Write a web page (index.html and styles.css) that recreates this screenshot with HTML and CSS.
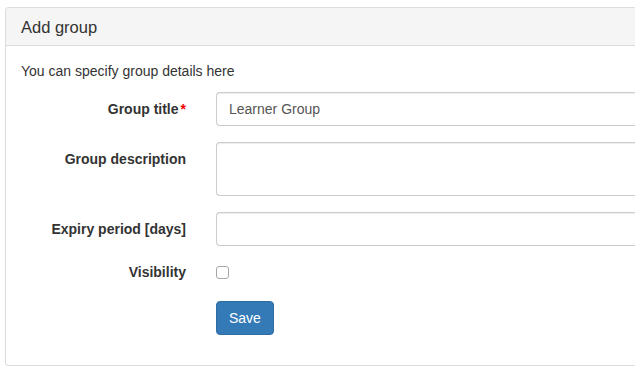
FILE: index.html
```html
<!DOCTYPE html>
<html lang="en">
<head>
  <meta charset="UTF-8" />
  <title>Add group</title>
  <link rel="stylesheet" href="styles.css">
</head>
<body>
  <div class="panel">
    <div class="panel-heading">
      <h3 class="panel-title">Add group</h3>
    </div>
    <div class="panel-body">
      <p class="intro">You can specify group details here</p>
      <form class="form-horizontal">
        <div class="form-group">
          <label class="control-label" for="title">Group title<span class="required">*</span></label>
          <input class="form-control" id="title" type="text" value="Learner Group" />
        </div>
        <div class="form-group">
          <label class="control-label" for="desc">Group description</label>
          <textarea class="form-control" id="desc" rows="2"></textarea>
        </div>
        <div class="form-group">
          <label class="control-label" for="expiry">Expiry period [days]</label>
          <input class="form-control" id="expiry" type="text" />
        </div>
        <div class="form-group visibility">
          <label class="control-label plain" for="visible">Visibility</label>
          <div><input class="check" id="visible" type="checkbox" /></div>
        </div>
        <div class="form-group last">
          <span></span>
          <div><button type="submit" class="btn">Save</button></div>
        </div>
      </form>
    </div>
  </div>
</body>
</html>
```

FILE: styles.css
```css
body {
  margin: 0;
  font-family: "Liberation Sans", Arial, sans-serif;
  font-size: 14px;
  line-height: 20px;
  color: #333;
  background: #fff;
}
/* the panel runs on past the right edge of the view, so its right side is open */
.panel {
  margin: 7px 0 0 5px;
  border: 1px solid #ddd;
  border-right: none;
  border-radius: 4px 0 0 4px;
  box-shadow: 0 1px 1px rgba(0, 0, 0, 0.05);
}
.panel-heading {
  background-color: #f5f5f5;
  border-bottom: 1px solid #ddd;
  padding: 10px 15px 9px;
  border-radius: 3px 0 0 0;
}
.panel-title {
  margin: 0;
  font-size: 16.5px;
  font-weight: normal;
  line-height: 18px;
}
.panel-body {
  padding: 15px 0 15px 15px;
}
.intro {
  margin: 0 0 11px;
}
.form-group {
  display: grid;
  grid-template-columns: 165px 1fr;
  column-gap: 30px;
  margin-bottom: 16px;
}
.form-group.last {
  margin-bottom: 15px;
}
.form-group.visibility {
  margin-bottom: 19px;
}
.control-label {
  text-align: right;
  font-weight: bold;
  padding-top: 7px;
}
.control-label.plain {
  padding-top: 0;
}
.required {
  color: #e00;
  margin-left: 2px;
}
.form-control {
  display: block;
  box-sizing: border-box;
  width: 100%;
  height: 34px;
  padding: 6px 12px;
  font-family: inherit;
  font-size: 14px;
  line-height: 20px;
  color: #555;
  background: #fff;
  border: 1px solid #ccc;
  border-right: none;
  border-radius: 4px 0 0 4px;
  box-shadow: inset 0 1px 1px rgba(0, 0, 0, 0.075);
  margin: 0;
}
textarea.form-control {
  height: 54px;
  resize: none;
}
.check {
  appearance: none;
  -webkit-appearance: none;
  display: block;
  width: 13px;
  height: 13px;
  margin: 4px 0 0;
  border: 1px solid #a6a6a6;
  border-radius: 3px;
  background: #fff;
  box-sizing: border-box;
}
.btn {
  display: inline-block;
  padding: 6px 12px;
  font-family: inherit;
  font-size: 14px;
  line-height: 20px;
  color: #fff;
  background-color: #337ab7;
  border: 1px solid #2e6da4;
  border-radius: 4px;
  cursor: pointer;
}
.btn:hover {
  background-color: #286090;
}
```
